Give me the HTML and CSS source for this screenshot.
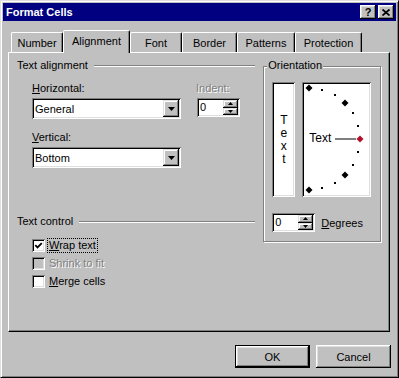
FILE: index.html
```html
<html>
<head>
  <title>Format Cells</title>
  <meta charset="utf-8">
  <link rel="stylesheet" href="styles.css">
</head>
<body>
  <div class="window">
    <!-- caption -->
    <div class="titlebar">
      <span class="title">Format Cells</span>
      <span class="tbtn">?</span>
      <span class="tbtn"><svg width="8" height="7" viewBox="0 0 8 7"><path d="M0.5 0.5L7.5 6.5M7.5 0.5L0.5 6.5" stroke="#000" stroke-width="1.7"/></svg></span>
    </div>

    <!-- tab strip -->
    <div class="tabs">
      <div class="tab">Number</div>
      <div class="tab active">Alignment</div>
      <div class="tab">Font</div>
      <div class="tab">Border</div>
      <div class="tab">Patterns</div>
      <div class="tab">Protection</div>
    </div>

    <div class="panel">
      <div class="col-left">
        <div class="group-head"><span>Text alignment</span><i class="rule"></i></div>

        <div class="align-fields">
          <div class="field-main">
            <div class="lbl"><u>H</u>orizontal:</div>
            <div class="select">
              <span class="select-val">General</span>
              <span class="drop"><svg width="7" height="4" viewBox="0 0 7 4"><path d="M0 0h7L3.5 4z" fill="#000"/></svg></span>
            </div>
            <div class="lbl lbl-v"><u>V</u>ertical:</div>
            <div class="select">
              <span class="select-val">Bottom</span>
              <span class="drop"><svg width="7" height="4" viewBox="0 0 7 4"><path d="M0 0h7L3.5 4z" fill="#000"/></svg></span>
            </div>
          </div>
          <div class="field-indent">
            <div class="lbl disabled">Indent:</div>
            <div class="spin">
              <span class="spin-val">0</span>
              <span class="spin-btns">
                <span class="sbtn"><svg width="5" height="3" viewBox="0 0 5 3"><path d="M2.5 0L5 3H0z" fill="#000"/></svg></span>
                <span class="sbtn"><svg width="5" height="3" viewBox="0 0 5 3"><path d="M0 0h5L2.5 3z" fill="#000"/></svg></span>
              </span>
            </div>
          </div>
        </div>

        <div class="group-head group-control"><span>Text control</span><i class="rule"></i></div>

        <div class="checks">
          <div class="check">
            <span class="box"><svg width="9" height="9" viewBox="0 0 9 9"><path d="M1.3 4.2L3.5 6.4L7.8 2.1" fill="none" stroke="#000" stroke-width="1.8"/></svg></span>
            <span class="focus"><u>W</u>rap text</span>
          </div>
          <div class="check">
            <span class="box box-off"></span>
            <span class="disabled">Shrink to fit</span>
          </div>
          <div class="check">
            <span class="box"></span>
            <span><u>M</u>erge cells</span>
          </div>
        </div>
      </div>

      <div class="orient">
        <div class="orient-title">Orientation</div>
        <div class="orient-row">
          <div class="vtext">
            <span>T</span><span>e</span><span>x</span><span>t</span>
          </div>
          <div class="dial">
            <svg class="dial-marks" width="65" height="111" viewBox="0 0 65 111">
              <g fill="#000">
                <path d="M5 0.5L8.5 4L5 7.5L1.5 4z"/>
                <path d="M41 15.5L44.5 19L41 22.5L37.5 19z"/>
                <path d="M41 87.5L44.5 91L41 94.5L37.5 91z"/>
                <path d="M5 102.5L8.5 106L5 109.5L1.5 106z"/>
                <rect x="17" y="5" width="2" height="2"/>
                <rect x="30" y="10" width="2" height="2"/>
                <rect x="48" y="28" width="2" height="2"/>
                <rect x="53" y="41" width="2" height="2"/>
                <rect x="53" y="67" width="2" height="2"/>
                <rect x="48" y="80" width="2" height="2"/>
                <rect x="30" y="98" width="2" height="2"/>
                <rect x="17" y="103" width="2" height="2"/>
                <rect x="31" y="54.5" width="21" height="1"/>
              </g>
              <path d="M56 51.5L59.5 55L56 58.5L52.5 55z" fill="#b0102a"/>
            </svg>
            <span class="dial-text">Text</span>
          </div>
        </div>
        <div class="degrees">
          <div class="spin">
            <span class="spin-val">0</span>
            <span class="spin-btns">
              <span class="sbtn"><svg width="5" height="3" viewBox="0 0 5 3"><path d="M2.5 0L5 3H0z" fill="#000"/></svg></span>
              <span class="sbtn"><svg width="5" height="3" viewBox="0 0 5 3"><path d="M0 0h5L2.5 3z" fill="#000"/></svg></span>
            </span>
          </div>
          <span class="deg-lbl"><u>D</u>egrees</span>
        </div>
      </div>
    </div>

    <div class="buttons">
      <div class="btn btn-default">OK</div>
      <div class="btn">Cancel</div>
    </div>
  </div>
</body>
</html>
```

FILE: styles.css
```css
body {
  margin: 0;
  font: 400 11px "Liberation Sans", Arial, sans-serif;
  color: #000;
  background: #c0c0c0;
}

u {
  text-decoration: underline;
}

.window {
  width: 399px;
  height: 378px;
  box-sizing: border-box;
  padding: 2px;
  background: #c0c0c0;
  border: 1px solid;
  border-color: #dfdfdf #000 #000 #dfdfdf;
  box-shadow: inset 1px 1px #fff, inset -1px -1px #808080;
}

/* caption */
.titlebar {
  height: 18px;
  display: flex;
  align-items: center;
  padding: 0 2px 0 3px;
  background: #000080;
}

.title {
  flex: 1;
  color: #fff;
  font-weight: bold;
}

.tbtn {
  width: 16px;
  height: 14px;
  margin-left: 2px;
  box-sizing: border-box;
  display: flex;
  align-items: center;
  justify-content: center;
  background: #c0c0c0;
  font-weight: bold;
  font-size: 11px;
  line-height: 14px;
  box-shadow: inset -1px -1px #000, inset 1px 1px #fff, inset -2px -2px #808080, inset 2px 2px #dfdfdf;
}

/* tabs */
.tabs {
  display: flex;
  align-items: flex-end;
  height: 22px;
  margin-top: 9px;
  padding-left: 8px;
}

.tab {
  height: 20px;
  box-sizing: border-box;
  padding-top: 4px;
  line-height: 13px;
  text-align: center;
  border: 1px solid;
  border-bottom: 0;
  border-color: #fff #000 transparent #fff;
  border-radius: 2px 2px 0 0;
  box-shadow: inset -1px 0 #808080;
}

.tab:nth-child(1) { width: 52px; }
.tab:nth-child(2) { width: 67px; }
.tab:nth-child(3) { width: 52px; }
.tab:nth-child(4) { width: 55px; }
.tab:nth-child(5) { width: 58px; }
.tab:nth-child(6) { width: 67px; }

.tab.active {
  height: 23px;
  margin-bottom: -1px;
  position: relative;
  z-index: 1;
  background: #c0c0c0;
}

/* page */
.panel {
  width: 382px;
  height: 280px;
  box-sizing: border-box;
  margin-left: 5px;
  padding: 6px 8px 0 8px;
  display: flex;
  gap: 8px;
  align-items: flex-start;
  border: 1px solid;
  border-color: #fff #000 #000 #fff;
  box-shadow: inset -1px -1px #808080;
}

.col-left {
  width: 239px;
}

.group-head {
  display: flex;
  align-items: center;
  height: 13px;
  line-height: 13px;
}

.rule {
  flex: 1;
  margin: 1px 0 0 6px;
  border-top: 1px solid #808080;
  border-bottom: 1px solid #fff;
}

.align-fields {
  display: flex;
  gap: 16px;
  margin-top: 10px;
  padding-left: 15px;
}

.lbl {
  height: 13px;
  line-height: 13px;
  margin-bottom: 3px;
}

.lbl-v {
  margin-top: 12px;
}

.field-indent .lbl {
  margin-left: -1px;
}

.disabled {
  color: #808080;
  text-shadow: 1px 1px #fff;
}

.select {
  width: 149px;
  height: 21px;
  box-sizing: border-box;
  display: flex;
  align-items: center;
  padding: 2px;
  background: #fff;
  box-shadow: inset 1px 1px #808080, inset -1px -1px #fff, inset 2px 2px #000, inset -2px -2px #dfdfdf;
}

.select-val {
  flex: 1;
  padding-left: 1px;
}

.drop {
  width: 16px;
  height: 17px;
  display: flex;
  align-items: center;
  justify-content: center;
  background: #c0c0c0;
  box-shadow: inset -1px -1px #000, inset 1px 1px #dfdfdf, inset -2px -2px #808080, inset 2px 2px #fff;
}

.spin {
  width: 43px;
  height: 19px;
  box-sizing: border-box;
  display: flex;
  padding: 2px;
  background: #fff;
  box-shadow: inset 1px 1px #808080, inset -1px -1px #fff, inset 2px 2px #000, inset -2px -2px #dfdfdf;
}

.spin-val {
  flex: 1;
  line-height: 15px;
  padding-left: 1px;
}

.spin-btns {
  width: 15px;
  display: flex;
  flex-direction: column;
}

.sbtn {
  flex: 1;
  display: flex;
  align-items: center;
  justify-content: center;
  background: #c0c0c0;
  box-shadow: inset -1px -1px #000, inset 1px 1px #dfdfdf, inset -2px -2px #808080, inset 2px 2px #fff;
}

.group-control {
  margin-top: 47px;
}

.checks {
  display: flex;
  flex-direction: column;
  gap: 1px;
  margin-top: 11px;
  padding-left: 15px;
}

.check {
  height: 17px;
  display: flex;
  align-items: flex-start;
  gap: 2px;
}

.box {
  width: 13px;
  height: 13px;
  box-sizing: border-box;
  display: flex;
  align-items: center;
  justify-content: center;
  margin-right: 1px;
  background: #fff;
  box-shadow: inset 1px 1px #808080, inset -1px -1px #fff, inset 2px 2px #000, inset -2px -2px #dfdfdf;
}

.box-off {
  background: #c0c0c0;
}

.check span:last-child {
  line-height: 13px;
  padding: 0 1px;
}

.focus {
  outline: 1px dotted #000;
  outline-offset: 0;
}

/* orientation group */
.orient {
  width: 118px;
  box-sizing: border-box;
  margin-top: 7px;
  padding: 0 8px 9px 8px;
  border: 1px solid #808080;
  box-shadow: 1px 1px #fff, inset 1px 1px #fff;
}

.orient-title {
  width: max-content;
  margin: -8px 0 0 -5px;
  padding: 0 1px;
  line-height: 13px;
  background: #c0c0c0;
}

.orient-row {
  display: flex;
  gap: 7px;
  margin-top: 10px;
}

.vtext {
  width: 23px;
  height: 115px;
  display: flex;
  flex-direction: column;
  justify-content: center;
  align-items: center;
  line-height: 13px;
  font-size: 12px;
  background: #fff;
  box-shadow: inset 1px 1px #808080, inset -1px -1px #fff, inset 2px 2px #000, inset -2px -2px #dfdfdf;
}

.dial {
  width: 69px;
  height: 115px;
  box-sizing: border-box;
  padding: 2px;
  position: relative;
  background: #fff;
  box-shadow: inset 1px 1px #808080, inset -1px -1px #fff, inset 2px 2px #000, inset -2px -2px #dfdfdf;
}

.dial-marks {
  display: block;
}

.dial-text {
  position: absolute;
  left: 7px;
  top: 50px;
  line-height: 13px;
  font-size: 12px;
}

.degrees {
  display: flex;
  align-items: center;
  margin-top: 16px;
}

.deg-lbl {
  margin-left: 6px;
}

/* dialog buttons */
.buttons {
  display: flex;
  justify-content: flex-end;
  gap: 6px;
  margin-top: 13px;
  padding-right: 5px;
}

.btn {
  width: 75px;
  height: 23px;
  box-sizing: border-box;
  display: flex;
  align-items: center;
  justify-content: center;
  background: #c0c0c0;
  box-shadow: inset -1px -1px #000, inset 1px 1px #fff, inset -2px -2px #808080, inset 2px 2px #dfdfdf;
}

.btn-default {
  border: 1px solid #000;
}
```
